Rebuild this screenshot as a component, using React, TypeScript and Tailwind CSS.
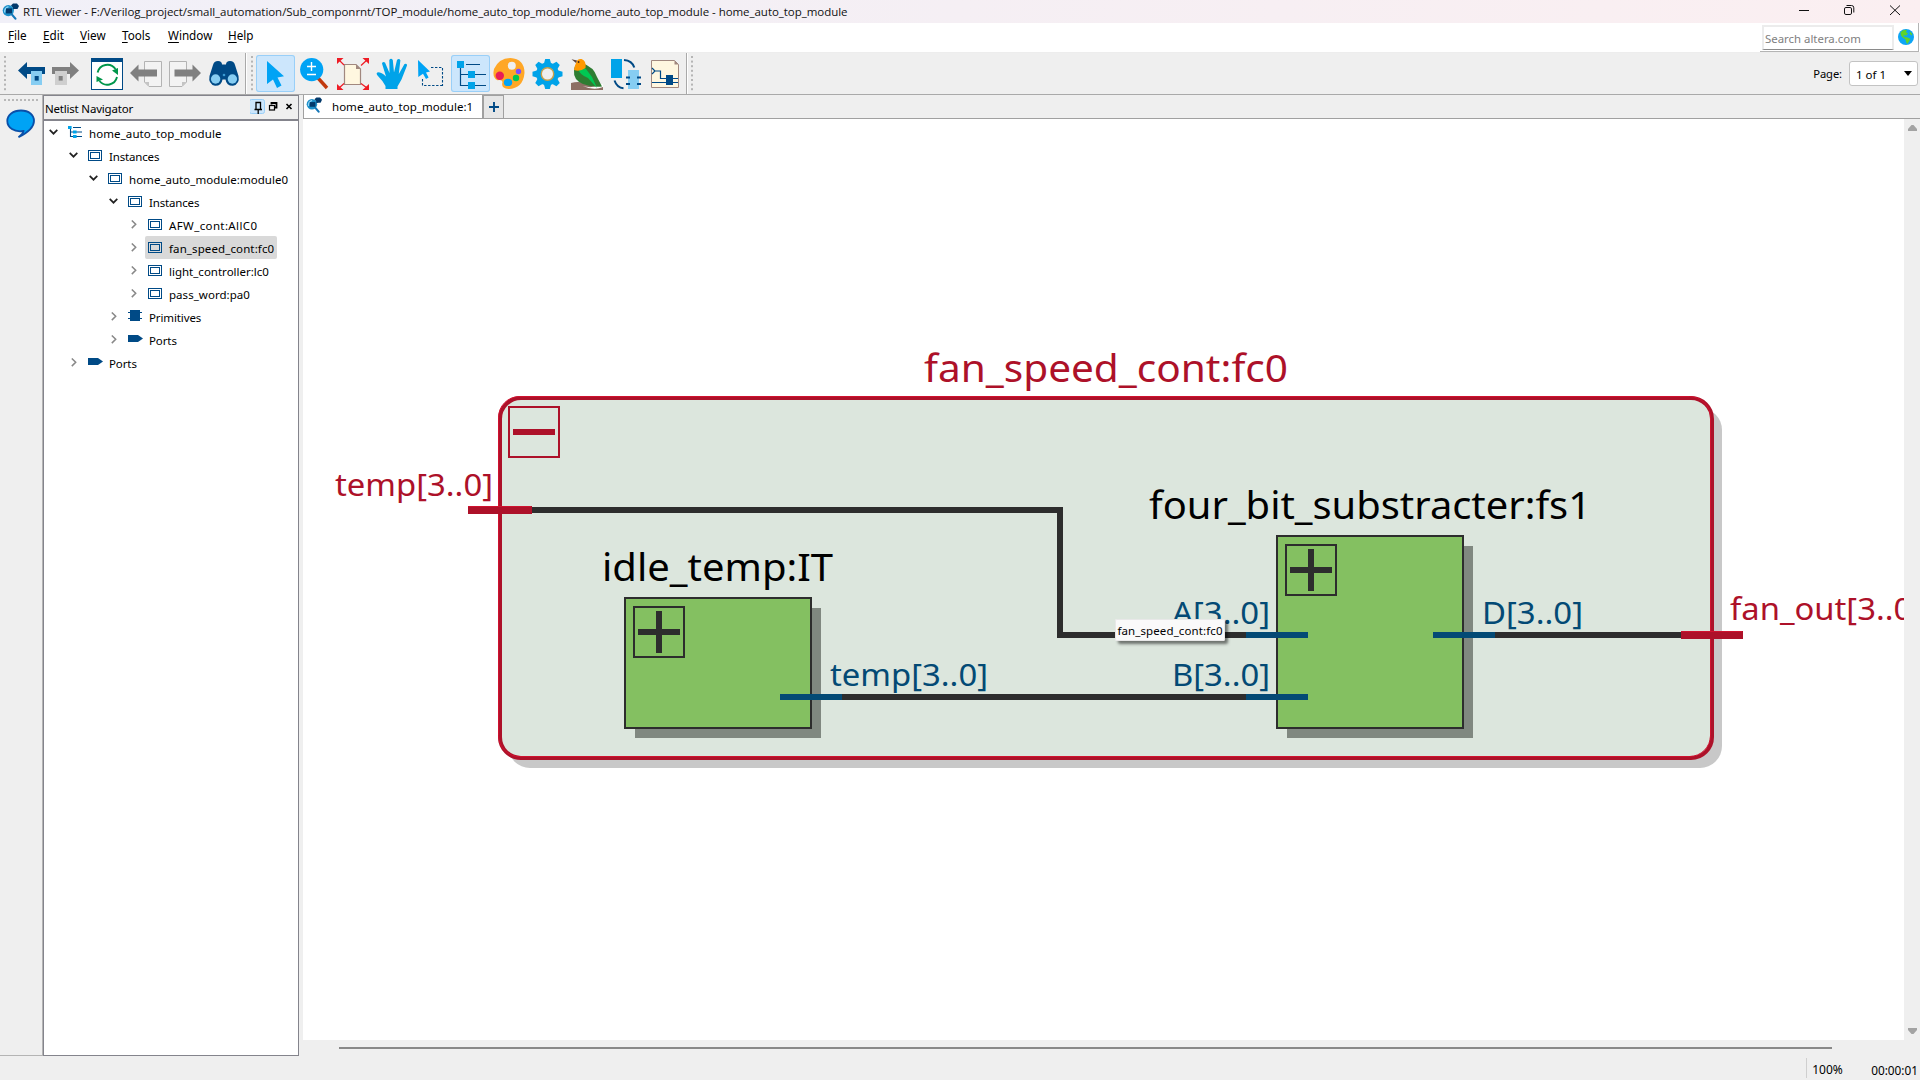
import type { ReactNode } from 'react';

const NAVY = '#004a86';
const SKY = '#00a3e9';
const RED = '#ad1129';
const WIRE = '#2d2d2d';
const PORT = '#034a75';
const GREY = '#808080';

const UI_FONT = "font-['Noto_Sans',sans-serif]";

function AppGlyph({ size }: { size: number }) {
  return (
    <svg width={size} height={size} viewBox="0 0 17 17" className="shrink-0">
      <path d="M9 2.5 L11 0.5 H15 L17 3 L15.5 6 H11.5 Z" fill="#03396b" />
      <circle cx="6.3" cy="7.6" r="5.6" fill="#1c8fc9" />
      <path d="M2.6 9.5 Q2.2 5 6.5 3.6" stroke="#8fd3f5" strokeWidth="1.3" fill="none" />
      <rect x="4" y="5.4" width="6" height="5" fill="#03396b" />
      <path d="M10 11.6 L13.4 15.6" stroke="#1477b8" strokeWidth="2.2" strokeLinecap="round" />
      <path d="M11 6 L14 4" stroke="#03396b" strokeWidth="1.4" />
    </svg>
  );
}

function TitleBar() {
  return (
    <div className="flex h-[23px] shrink-0 items-center bg-gradient-to-r from-[#f1f0f8] via-[#f5eff4] to-[#fbeff1] pl-[2px]">
      <AppGlyph size={17} />
      <span className="ml-[4px] flex-1 whitespace-nowrap font-['Open_Sans',sans-serif] text-[11.5px] leading-[23px] tracking-[-0.044px] text-[#111]">
        RTL Viewer - F:/Verilog_project/small_automation/Sub_componrnt/TOP_module/home_auto_top_module/home_auto_top_module - home_auto_top_module
      </span>
      <svg width="121" height="23" viewBox="1799 0 121 23" fill="none" stroke="#111" strokeWidth="1">
        <path d="M1799 10.5 H1809" />
        <rect x="1844.5" y="7.5" width="7" height="7" rx="1.4" />
        <path d="M1846.5 5.5 H1851.5 Q1853.8 5.5 1853.8 7.8 V12.5" />
        <path d="M1890 5.5 L1900 15 M1900 5.5 L1890 15" />
      </svg>
    </div>
  );
}

const MENUS: { key: string; rest: string; cls: string }[] = [
  { key: 'F', rest: 'ile', cls: 'w-[35px]' },
  { key: 'E', rest: 'dit', cls: 'w-[37px]' },
  { key: 'V', rest: 'iew', cls: 'w-[42px]' },
  { key: 'T', rest: 'ools', cls: 'w-[46px]' },
  { key: 'W', rest: 'indow', cls: 'w-[60px]' },
  { key: 'H', rest: 'elp', cls: 'w-[40px]' },
];

function MenuBar() {
  return (
    <div className="flex h-[30px] shrink-0 items-start border-b border-[#ededed] bg-white pl-[8px]">
      {MENUS.map((m) => (
        <span key={m.key} className={`${m.cls} whitespace-nowrap text-[11.7px] leading-[25px] text-black`}>
          <span className="underline underline-offset-2">{m.key}</span>
          {m.rest}
        </span>
      ))}
      <div className="flex-1" />
      <div className="flex h-[29px] w-[159px] items-start border-r border-b border-[#b4b4b4] pl-[2px]">
        <div className="mt-[2px] flex h-[25px] w-[132px] items-center border-x-2 border-t-2 border-b border-x-[#ececec] border-t-[#ececec] border-b-[#8a8a8a] pt-[2px] pl-[1px] text-[11.4px] text-[#808080]">
          Search altera.com
        </div>
        <svg width="16" height="16" viewBox="0 0 16 16" className="mt-[6px] ml-[4px]">
          <circle cx="8" cy="8" r="8" fill="#0ea5f5" />
          <path d="M2.5 3.6 L5 1.2 L9 0.8 L8 3 L10 4.5 L8.2 6.6 L5.5 6.3 L6 8 L9.5 8.4 L12.5 10 L11 12.5 L9.3 15 L8 13 L7.6 10.6 L4.6 8.6 L3 6.5 Z M12 2.5 L14.5 5 L13.4 6.6 L11.5 4.6 Z" fill="#5fd32c" />
        </svg>
      </div>
      <div className="w-px" />
    </div>
  );
}

function DotHandle() {
  return (
    <svg width="4" height="36" viewBox="0 0 4 36" className="shrink-0">
      {[0, 1, 2, 3, 4, 5, 6, 7].map((i) => (
        <rect key={i} x="0" y={i * 4.6 + 1} width="2" height="2" fill="#b5b5b5" />
      ))}
    </svg>
  );
}

function Tool({ x, active, children }: { x: number; active?: boolean; children: ReactNode }) {
  return (
    <div
      className={
        active
          ? 'h-[37px] w-[39px] shrink-0 rounded-[3px] bg-[#cce6fc] shadow-[inset_0_0_0_1px_#99cff8]'
          : 'h-[37px] w-[39px] shrink-0'
      }
    >
      <svg width="39" height="37" viewBox={`${x} 55 39 37`} className="overflow-visible">
        {children}
      </svg>
    </div>
  );
}

const GEAR_TEETH = [0, 45, 90, 135, 180, 225, 270, 315];

function ToolBar() {
  return (
    <div className="flex h-[42px] shrink-0 items-start border-b border-[#a9a9a9] bg-[#efefef] pt-[2px]">
      <div className="flex w-[10px] pl-[4px]">
        <DotHandle />
      </div>
      <Tool x={10}>
        <path d="M18 70.5 L27 62 V67 H45 V74 H27 V79 Z" fill={NAVY} />
        <rect x="31" y="71" width="11" height="14" fill="#86cdf2" />
        <rect x="34.7" y="76" width="4" height="4.6" fill={NAVY} />
      </Tool>
      <Tool x={49}>
        <path d="M79 70.5 L70 62 V67 H52 V74 H70 V79 Z" fill={GREY} />
        <rect x="55" y="71" width="12" height="14" fill="#cfcfcf" />
        <rect x="58.7" y="76" width="4" height="4.6" fill={GREY} />
      </Tool>
      <Tool x={88}>
        <rect x="91.5" y="58.5" width="31" height="31" fill="#fff" stroke={NAVY} />
        <rect x="91" y="58" width="32" height="4" fill={NAVY} />
        <g fill="none" stroke="#00964b" strokeWidth="1.9">
          <path d="M97.6 72.5 A10 10 0 0 1 115.5 69" />
          <path d="M117 77 A10 10 0 0 1 99.5 81" />
        </g>
        <path d="M118 68 V75 L112 70.6 Z M96.5 82 V76 L103 79.4 Z" fill="#00964b" />
      </Tool>
      <Tool x={127}>
        <path d="M144.5 61.5 H161.5 V86.5 H149 L144.5 82 Z" fill="#f3f3f3" stroke="#b3b3b3" />
        <path d="M144.5 82 H149 V86.5 Z" fill="#c4c4c4" />
        <path d="M130 73 L138.5 64.5 V69.5 H157 V76.5 H138.5 V81.5 Z" fill={GREY} />
      </Tool>
      <Tool x={166}>
        <path d="M169.5 61.5 H186.5 V82 L182 86.5 H169.5 Z" fill="#f3f3f3" stroke="#b3b3b3" />
        <path d="M186.5 82 H182 V86.5 Z" fill="#c4c4c4" />
        <path d="M201 73 L192.5 64.5 V69.5 H174.5 V76.5 H192.5 V81.5 Z" fill={GREY} />
      </Tool>
      <Tool x={205}>
        <path
          d="M213 65 Q214 61 218 61 Q222 61 222 64.5 H226 Q226 61 230 61 Q234 61 235 65 L238.5 76 Q240 84 233 85.8 Q226.5 86 225.5 79.5 H222.5 Q221.5 86 215 85.8 Q208 84 209.5 76 Z"
          fill={NAVY}
        />
        <circle cx="215.6" cy="79" r="4.7" fill="#86cdf2" />
        <circle cx="232.4" cy="79" r="4.7" fill="#86cdf2" />
        <circle cx="224" cy="75" r="1.3" fill="#3b9bd2" />
      </Tool>
      <div className="-mt-[2px] ml-[1px] h-[41px] w-[2px] border-l border-[#a9a9a9] bg-white" />
      <div className="flex w-[9px] pl-[4px]">
        <DotHandle />
      </div>
      <Tool x={256} active>
        <path d="M267 61 L284 76.2 L277.5 77.5 L281.5 85.5 L277 88 L273 79.5 L267 84 Z" fill="#00a3f5" />
      </Tool>
      <Tool x={295}>
        <path d="M318 78 L327 88" stroke="#c2390d" strokeWidth="3.4" />
        <circle cx="311.7" cy="69.6" r="11.6" fill="#00a3f5" />
        <path d="M307 66.5 H316 M311.5 62 V71 M307 74.5 H316" stroke="#fff" strokeWidth="1.4" />
      </Tool>
      <Tool x={334}>
        <path d="M344.5 64.5 H356 L360.5 69 V84.5 H344.5 Z" fill="#fff7e0" stroke="#a1887f" strokeWidth="1.2" />
        <path d="M356 64.5 V69 H360.5 Z" fill="#a1887f" />
        <path d="M339 60 L344 65 M367 60 L361 65.5 M339 88 L344 83.5 M367 88 L361 83.5" stroke="#ee1c25" strokeWidth="1.2" />
        <path d="M337 58 H343.5 L337 64 Z M369 58 H362.5 L369 64 Z M337 90 H343.5 L337 84 Z M369 90 H362.5 L369 84 Z" fill="#ee1c25" />
      </Tool>
      <Tool x={373}>
        <path d="M385.5 86 Q383 81 377.5 75.5 Q375.5 73 378 72.3 Q381.5 72.3 386 76.5 L382 63.5 Q382.3 61 385 62.5 L389.5 73 L389.3 60 Q391 57.6 392.8 60 L394 72.5 L397 60 Q399 57.8 400.4 60.3 L398.8 74 L404.5 64 Q407.3 62.8 407 65.5 L401.5 79.5 L397.5 86.5 V89 H385.5 Z" fill={SKY} />
      </Tool>
      <Tool x={412}>
        <path d="M418 60 L430 71.5 L426 72.5 L428.6 77.5 L426 79 L423 73.8 L418.3 77 Z" fill="#00a3f5" />
        <path d="M431 67.5 H442.5 V86 M442.5 85.5 H422.5 V79" stroke={NAVY} strokeWidth="1.1" strokeDasharray="2.4 1.6" fill="none" />
      </Tool>
      <Tool x={451} active>
        <path d="M466 64.5 H480 M460.5 68 V85.5 H486 M460.5 74.5 H486" stroke={NAVY} strokeWidth="1.2" fill="none" />
        <rect x="457" y="61" width="7" height="7" fill={SKY} />
        <rect x="468" y="71" width="7" height="7" fill={SKY} />
        <rect x="468" y="82" width="7" height="7" fill={SKY} />
      </Tool>
      <Tool x={490}>
        <path d="M494 69 Q499 58 510.5 58 Q524.5 59 524.5 73 Q523 88.5 508.5 89 Q500.5 88.5 502.5 82 Q502 79.5 497.5 80.3 Q493 78 493.5 72 Z" fill="#ffa726" />
        <circle cx="511.8" cy="65.8" r="4" fill="#efefef" />
        <circle cx="499.8" cy="75.8" r="4.2" fill="#e91e55" />
        <circle cx="518.5" cy="71.5" r="2.7" fill="#7c4dff" />
        <circle cx="516" cy="78" r="3.2" fill="#00c853" />
        <ellipse cx="508" cy="82.4" rx="4.2" ry="3.6" fill="#00a3f5" />
      </Tool>
      <Tool x={529}>
        {GEAR_TEETH.map((a) => (
          <path key={a} d="M543.8 64 L545.2 59 H549.8 L551.2 64 Z" fill={SKY} transform={`rotate(${a} 547.5 74)`} />
        ))}
        <circle cx="547.5" cy="74" r="11.4" fill={SKY} />
        <circle cx="547.5" cy="74" r="6.2" fill="#efefef" stroke="#c8a04a" strokeWidth="1.4" />
      </Tool>
      <Tool x={568}>
        <path d="M571 83 Q579 81 586 83.5 L603 86 V90 H571 Z" fill="#8d6e63" />
        <path d="M583 86 Q592 89 603 84 V87 Q594 91 583 86 Z" fill="#fff" />
        <path d="M574 70 Q575 62 582 63 Q594 67 597 77 L602 86.5 Q592 87.5 583 84 Q573 80 574 70 Z" fill="#2e7d32" />
        <path d="M578 69 Q583 66 586 69 L592 77 L597 88 L588 78 Q580 75 578 69 Z" fill="#00c853" />
        <path d="M574 70 Q574.5 66 576 63 Q577 58.5 581.5 59 Q586.5 60.5 585.5 68 Q580 72 574 70 Z" fill="#ff9800" />
        <path d="M571.5 59.3 L577 60.5 L576 63 Z" fill="#5d4037" />
        <circle cx="578.6" cy="62" r="0.9" fill="#3e2723" />
      </Tool>
      <Tool x={607}>
        <rect x="611" y="59" width="11" height="19" fill={SKY} />
        <rect x="628" y="70" width="11" height="19" fill="#86cdf2" />
        <path d="M626 77.5 H630 M626 84 H630 M637 77.5 H641 M637 84 H641" stroke={NAVY} strokeWidth="1.8" />
        <path d="M624 60 Q632 60.5 634.3 67.5 M614.5 80.5 Q617 87.8 623.5 88.3" stroke={NAVY} strokeWidth="2" fill="none" />
      </Tool>
      <Tool x={646}>
        <path d="M651.5 60.5 H674.5 L678.5 64.5 V87.5 H651.5 Z" fill="#fff7e0" stroke="#a1887f" />
        <path d="M674.5 60.5 V64.5 H678.5 Z" fill="#a1887f" />
        <path d="M652 68 L655 71 L652 74 M655 71 H660.5 V78.5 H678 M652 82.5 H678" stroke={NAVY} strokeWidth="1.2" fill="none" />
        <rect x="666" y="75" width="7" height="10" fill={NAVY} />
      </Tool>
      <div className="-mt-[2px] ml-[1px] h-[41px] w-[2px] border-l border-[#a9a9a9] bg-white" />
      <div className="flex w-[9px] pl-[3px]">
        <DotHandle />
      </div>
      <div className="flex-1" />
      <div className="mt-[6px] flex h-[25px] items-center">
        <span className="mt-[2px] mr-[7px] text-[11.2px] tracking-[-0.1px] text-black">Page:</span>
        <div className="mr-[2px] flex h-[25px] w-[69px] items-center justify-between rounded-[3px] border border-[#c3c3c3] bg-white pr-[5px] pl-[6px] text-[11.5px] text-black">
          <span className="mt-[2px]">1 of 1</span>
          <svg width="8" height="5" viewBox="0 0 8 5">
            <path d="M0 0 H8 L4 5 Z" fill="#000" />
          </svg>
        </div>
      </div>
    </div>
  );
}

type IconKind = 'tree' | 'inst' | 'prim' | 'port';

function NodeIcon({ kind }: { kind: IconKind }) {
  return (
    <svg width="15" height="13" viewBox="0 0 15 13" className="shrink-0">
      {kind === 'tree' && (
        <g>
          <path d="M5 1.5 H13 M2.5 2 V10.5 H14 M2.5 6 H14" stroke={NAVY} strokeWidth="1.1" fill="none" />
          <rect x="0" y="0" width="3.6" height="3" fill={SKY} />
          <rect x="5" y="4.5" width="3.6" height="3" fill={SKY} />
          <rect x="5" y="9" width="3.6" height="3" fill={SKY} />
        </g>
      )}
      {kind === 'inst' && (
        <g fill="none" stroke={NAVY}>
          <rect x="0.5" y="1.5" width="13" height="10" />
          <rect x="2.5" y="3.5" width="9" height="6" />
        </g>
      )}
      {kind === 'prim' && (
        <g>
          <path d="M0 2.5 H14 M0 8.5 H14" stroke={NAVY} strokeWidth="1.2" />
          <rect x="2" y="0" width="10" height="11" fill={NAVY} />
        </g>
      )}
      {kind === 'port' && <path d="M0 2 H10 L15 5.5 L10 9 H0 Z" fill={NAVY} />}
    </svg>
  );
}

const TREE: { pad: string; open: boolean; kind: IconKind; label: string; track: string; selected?: boolean }[] = [
  { pad: 'pl-[5px]', open: true, kind: 'tree', label: 'home_auto_top_module', track: 'tracking-[0.09px]' },
  { pad: 'pl-[25px]', open: true, kind: 'inst', label: 'Instances', track: 'tracking-[-0.16px]' },
  { pad: 'pl-[45px]', open: true, kind: 'inst', label: 'home_auto_module:module0', track: 'tracking-[0.02px]' },
  { pad: 'pl-[65px]', open: true, kind: 'inst', label: 'Instances', track: 'tracking-[-0.16px]' },
  { pad: 'pl-[85px]', open: false, kind: 'inst', label: 'AFW_cont:AllC0', track: 'tracking-[0.38px]' },
  { pad: 'pl-[85px]', open: false, kind: 'inst', label: 'fan_speed_cont:fc0', track: 'tracking-[0.11px]', selected: true },
  { pad: 'pl-[85px]', open: false, kind: 'inst', label: 'light_controller:lc0', track: 'tracking-[0px]' },
  { pad: 'pl-[85px]', open: false, kind: 'inst', label: 'pass_word:pa0', track: 'tracking-[0.04px]' },
  { pad: 'pl-[65px]', open: false, kind: 'prim', label: 'Primitives', track: 'tracking-[-0.12px]' },
  { pad: 'pl-[65px]', open: false, kind: 'port', label: 'Ports', track: 'tracking-[-0.1px]' },
  { pad: 'pl-[25px]', open: false, kind: 'port', label: 'Ports', track: 'tracking-[-0.1px]' },
];

function Navigator() {
  return (
    <div className="flex h-[961px] w-[256px] shrink-0 flex-col border border-[#84848c] bg-white">
      <div className="flex h-[25px] shrink-0 items-center border-b-2 border-[#84848c] bg-[#efefef] pl-[1px]">
        <span className="mt-[3px] flex-1 text-[11.5px] tracking-[-0.2px] text-black">Netlist Navigator</span>
        <svg width="48" height="23" viewBox="250 96 48 23">
          <rect x="249.5" y="99.5" width="15" height="14" rx="2" fill="#cce6fc" stroke="#99cff8" />
          <path d="M256 109.5 V102.5 H260.5 V109.5 M254.5 109.5 H262 M258.2 109.5 V114" stroke="#000" strokeWidth="1.3" fill="none" />
          <path d="M271.5 104.5 V103 H276.5 V107.5 H275" stroke="#000" strokeWidth="1.8" fill="none" />
          <rect x="269.5" y="105.5" width="5" height="4.5" fill="#efefef" stroke="#000" strokeWidth="1.2" />
          <path d="M286.5 104 L291.5 109 M291.5 104 L286.5 109" stroke="#000" strokeWidth="1.6" />
        </svg>
      </div>
      {TREE.map((n, i) => (
        <div key={i} className={`flex h-[23px] shrink-0 items-center ${n.pad}`}>
          <svg width="9" height="9" viewBox="0 0 9 9" className="shrink-0">
            {n.open ? (
              <path d="M0.7 1.9 L4.5 5.7 L8.3 1.9" fill="none" stroke="#222" strokeWidth="1.7" />
            ) : (
              <path d="M2.8 0.5 L6.7 4.3 L2.8 8.1" fill="none" stroke="#888" strokeWidth="1.5" />
            )}
          </svg>
          <div
            className={`ml-[7px] flex h-[23px] items-center gap-[6px] px-[3px] ${n.selected ? 'rounded-[2px] bg-[#d9d9d9]' : ''}`}
          >
            <NodeIcon kind={n.kind} />
            <span className={`mt-[2px] whitespace-nowrap text-[11.5px] leading-[20px] text-black ${n.track}`}>{n.label}</span>
          </div>
        </div>
      ))}
    </div>
  );
}

function PlusBox({ x, y }: { x: number; y: number }) {
  return (
    <g>
      <rect x={x + 1} y={y + 1} width="50" height="50" fill="none" stroke={WIRE} strokeWidth="2" />
      <rect x={x + 5} y={y + 23} width="42" height="6" fill={WIRE} />
      <rect x={x + 23} y={y + 5} width="6" height="42" fill={WIRE} />
    </g>
  );
}

function Caption({ x, y, w, size, color, children }: { x: number; y: number; w: number; size: number; color: string; children: string }) {
  return (
    <text x={x} y={y} fontSize={size} fill={color} textLength={w} lengthAdjust="spacingAndGlyphs">
      {children}
    </text>
  );
}

function Schematic() {
  return (
    <svg width="1601" height="921" viewBox="303 119 1601 921" className="block">
      <rect x="508" y="408" width="1214" height="360" rx="22" fill="#c8c8c8" />
      <rect x="500" y="398" width="1212" height="360" rx="21" fill="#dce6dd" stroke="#ad1129" strokeWidth="4" />
      <rect x="498.5" y="396.5" width="1212" height="360" rx="21" fill="none" stroke="#d0122f" strokeWidth="1" />
      <rect x="509" y="407" width="50" height="50" fill="none" stroke={RED} strokeWidth="2" />
      <rect x="513" y="429" width="42" height="6" fill={RED} />

      <path d="M532 510 H1060 V635 H1246" fill="none" stroke={WIRE} strokeWidth="6" />
      <path d="M842 697 H1246 M1495 635 H1681" fill="none" stroke={WIRE} strokeWidth="6" />

      <rect x="635" y="608" width="186" height="130" fill="#808880" />
      <rect x="625" y="598" width="186" height="130" fill="#84c061" stroke={WIRE} strokeWidth="2" />
      <PlusBox x={633} y={606} />
      <rect x="1287" y="546" width="186" height="192" fill="#808880" />
      <rect x="1277" y="536" width="186" height="192" fill="#84c061" stroke={WIRE} strokeWidth="2" />
      <PlusBox x={1285} y={544} />

      <path d="M780 697 H842 M1246 635 H1308 M1246 697 H1308 M1433 635 H1495" stroke={PORT} strokeWidth="6" />
      <path d="M468 510 H532 M1681 635 H1743" stroke={RED} strokeWidth="8" />
      <path d="M468 506.5 H531 M1681 631.5 H1742" stroke="#d0122f" strokeWidth="1" />

      <Caption x={924} y={382} w={364} size={39} color={RED}>fan_speed_cont:fc0</Caption>
      <Caption x={1149} y={519} w={442} size={39} color="#000">four_bit_substracter:fs1</Caption>
      <Caption x={602} y={581} w={231} size={39} color="#000">idle_temp:IT</Caption>
      <Caption x={335} y={495.5} w={158} size={31} color={RED}>temp[3..0]</Caption>
      <Caption x={830} y={685.5} w={158} size={31} color={PORT}>temp[3..0]</Caption>
      <Caption x={1172} y={623.5} w={98} size={31} color={PORT}>A[3..0]</Caption>
      <Caption x={1172} y={685.5} w={98} size={31} color={PORT}>B[3..0]</Caption>
      <Caption x={1482} y={623.5} w={101} size={31} color={PORT}>D[3..0]</Caption>
      <Caption x={1730} y={619.5} w={193} size={31} color={RED}>fan_out[3..0]</Caption>
    </svg>
  );
}

function Viewer() {
  return (
    <div className="ml-[4px] flex h-[961px] min-w-0 flex-1 flex-col">
      <div className="flex h-[24px] shrink-0 items-stretch border-b border-[#a0a0a0]">
        <div className="-mb-px flex w-[180px] items-center border-r border-b border-l border-[#a0a0a0] bg-white pl-[2px]">
          <div className="-mt-[3px]">
            <AppGlyph size={16} />
          </div>
          <span className="mt-[1px] ml-[10px] whitespace-nowrap text-[11.5px] leading-[20px] tracking-[0.03px] text-black">home_auto_top_module:1</span>
        </div>
        <div className="flex w-[21px] items-center justify-center border-t border-r border-l border-[#a0a0a0] bg-[#e6e6e6]">
          <svg width="10" height="10" viewBox="0 0 10 10">
            <path d="M5 0 V10 M0 5 H10" stroke={NAVY} strokeWidth="1.9" />
          </svg>
        </div>
      </div>
      <div className="flex h-[921px] shrink-0">
        <div className="relative w-[1601px] shrink-0 overflow-hidden bg-white">
          <Schematic />
          <div className="absolute top-[500px] left-[812px] flex h-[22px] w-[110px] items-center justify-center rounded-[2px] bg-[#fafafa] shadow-[3px_3px_3px_rgba(0,0,0,0.5),inset_0_0_0_1px_#e8e8e8]">
            <span className="mt-[2px] whitespace-nowrap text-[11.5px] leading-[18px] tracking-[0.11px] text-black">fan_speed_cont:fc0</span>
          </div>
        </div>
        <div className="flex flex-1 flex-col items-center justify-between pt-[6px] pb-[6px]">
          <svg width="9" height="6" viewBox="0 0 9 6">
            <path d="M3.5 0 H5.5 L9 4 V6 H0 V4 Z" fill="#a3a3a3" />
          </svg>
          <svg width="9" height="6" viewBox="0 0 9 6">
            <path d="M0 0 H9 V2 L5.5 6 H3.5 L0 2 Z" fill="#a3a3a3" />
          </svg>
        </div>
      </div>
      <div className="pt-[7px] pl-[36px]">
        <div className="h-[2px] w-[1493px] bg-[#888]" />
      </div>
    </div>
  );
}

export default function App() {
  return (
    <div className={`flex h-[1080px] w-[1920px] flex-col overflow-hidden bg-[#efefef] ${UI_FONT}`}>
      <TitleBar />
      <MenuBar />
      <ToolBar />
      <div className="flex h-[961px] shrink-0">
        <div className="flex w-[43px] shrink-0 flex-col items-start border-r border-b border-[#b4b4b4]">
          <svg width="42" height="52" viewBox="0 95 42 52">
            {[0, 1, 2, 3, 4, 5, 6, 7, 8].map((i) => (
              <rect key={i} x={4 + i * 4} y="99" width="2" height="2" fill="#b8b8b8" />
            ))}
            <path
              d="M21 110.5 C29 110.5 34 115 34 121 C34 128 27 133 18.5 137.3 C22 134.5 23.5 132.5 23.5 131 C14 132.5 7.3 127.5 7.3 121 C7.3 115 13 110.5 21 110.5 Z"
              fill="#00a3f5"
              stroke="#0a4fa8"
              strokeWidth="1.8"
            />
          </svg>
        </div>
        <Navigator />
        <Viewer />
      </div>
      <div className="flex flex-1 items-start justify-end pr-[2px]">
        <div className="mt-[2px] flex h-[20px] items-center border-l border-[#cfcfcf] pl-[5px] text-black">
          <span className="mt-[4px] w-[59px] text-[12px] leading-[18px]">100%</span>
          <span className="mt-[4px] text-[11.8px] leading-[18px]">00:00:01</span>
        </div>
      </div>
    </div>
  );
}
